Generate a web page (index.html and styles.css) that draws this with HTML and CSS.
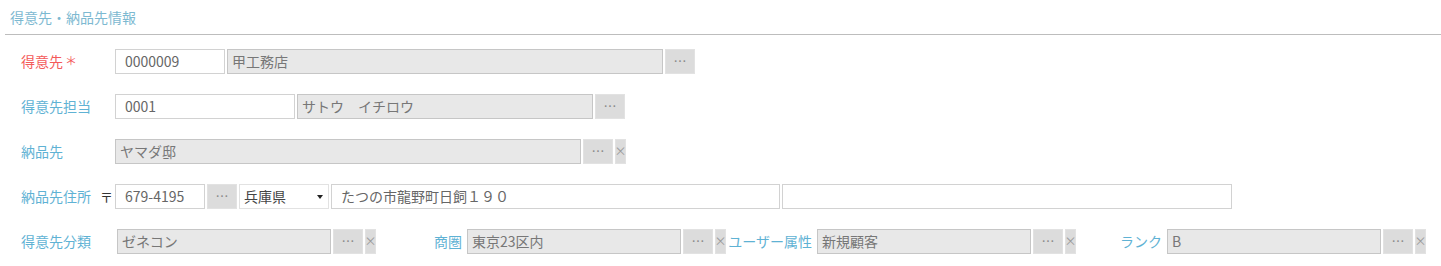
FILE: index.html
```html
<!DOCTYPE html>
<html lang="ja">
<head>
<meta charset="utf-8">
<link rel="stylesheet" href="styles.css">
</head>
<body>
<div class="section">
  <div class="section-title">得意先・納品先情報</div>
  <div class="form">
    <div class="row">
      <div class="label req">得意先<span class="ast">＊</span></div>
      <div class="field edit w110">0000009</div>
      <div class="field ro w436">甲工務店</div>
      <div class="btn">…</div>
    </div>
    <div class="row">
      <div class="label">得意先担当</div>
      <div class="field edit w180">0001</div>
      <div class="field ro w296">サトウ　イチロウ</div>
      <div class="btn">…</div>
    </div>
    <div class="row">
      <div class="label">納品先</div>
      <div class="field ro w466">ヤマダ邸</div>
      <div class="btn">…</div>
      <div class="clr">×</div>
    </div>
    <div class="row">
      <div class="label split"><span>納品先住所</span><span class="zip">〒</span></div>
      <div class="field edit w90">679-4195</div>
      <div class="btn">…</div>
      <div class="select w90"><span>兵庫県</span><span class="caret"></span></div>
      <div class="field edit w449">たつの市龍野町日飼１９０</div>
      <div class="field edit w450"></div>
    </div>
    <div class="row">
      <div class="group first">
        <div class="label w96">得意先分類</div>
        <div class="field ro w214">ゼネコン</div>
        <div class="btn">…</div>
        <div class="clr">×</div>
      </div>
      <div class="group">
        <div class="label right">商圏</div>
        <div class="field ro w214">東京23区内</div>
        <div class="btn">…</div>
        <div class="clr">×</div>
      </div>
      <div class="group">
        <div class="label right">ユーザー属性</div>
        <div class="field ro w214">新規顧客</div>
        <div class="btn">…</div>
        <div class="clr">×</div>
      </div>
      <div class="group">
        <div class="label right">ランク</div>
        <div class="field ro w214">B</div>
        <div class="btn">…</div>
        <div class="clr">×</div>
      </div>
    </div>
  </div>
</div>
</body>
</html>
```
FILE: styles.css
```css
html, body {
  margin: 0;
  padding: 0;
  background: #fff;
}
body {
  font-family: "Noto Sans CJK JP", "Noto Sans", sans-serif;
  font-size: 14px;
  color: #666;
}
.section {
  margin-left: 5px;
}
.section-title {
  height: 34px;
  line-height: 34px;
  padding-left: 5px;
  color: #7db9d1;
  font-size: 14px;
  border-bottom: 1px solid #bdbdbd;
}
.form {
  padding: 14px 0 0 16px;
  display: flex;
  flex-direction: column;
  gap: 20px;
}
.row {
  display: flex;
  align-items: center;
  height: 25px;
  gap: 2px;
}
.label {
  width: 94px;
  flex: none;
  color: #5fb2d4;
  line-height: 25px;
  white-space: nowrap;
  margin-right: -2px;
}
.label.req {
  color: #f45a5a;
}
.ast {
  font-size: 12px;
  margin-left: 2px;
  position: relative;
  top: -1px;
}
.label.split {
  display: flex;
  justify-content: space-between;
}
.zip {
  color: #333;
  font-size: 13px;
  margin-right: 2px;
}
.label.w96 {
  width: 96px;
}
.label.right {
  width: 91px;
  text-align: right;
  padding-right: 5px;
  box-sizing: border-box;
}
.group {
  display: flex;
  align-items: center;
  gap: 2px;
  height: 25px;
}
.group + .group {
  margin-left: -2px;
}
.field {
  height: 25px;
  box-sizing: border-box;
  line-height: 23px;
  white-space: nowrap;
  overflow: hidden;
  flex: none;
}
.field.edit {
  background: #fff;
  border: 1px solid #d2d2d2;
  padding-left: 9px;
  color: #666;
}
.field.ro {
  background: #e8e8e8;
  border: 1px solid #c6c6c6;
  padding-left: 4px;
  color: #777;
}
.select {
  height: 25px;
  box-sizing: border-box;
  border: 1px solid #e2e2e2;
  background: #fff;
  display: flex;
  align-items: center;
  justify-content: space-between;
  padding: 0 5px 0 4px;
  color: #444;
  line-height: 23px;
  flex: none;
}
.caret {
  width: 0;
  height: 0;
  border-left: 3.5px solid transparent;
  border-right: 3.5px solid transparent;
  border-top: 4px solid #222;
}
.btn {
  width: 30px;
  height: 25px;
  box-sizing: border-box;
  background: #dcdcdc;
  border: 1px solid #e2e2e2;
  color: #8a8a8a;
  font-size: 13px;
  text-align: center;
  line-height: 21px;
  flex: none;
}
.clr {
  width: 11px;
  height: 25px;
  box-sizing: border-box;
  background: #dcdcdc;
  border: 1px solid #e2e2e2;
  color: #999;
  font-size: 12px;
  line-height: 22px;
  flex: none;
  display: flex;
  justify-content: center;
  padding: 0;
}
.w90 { width: 90px; }
.w110 { width: 110px; }
.w180 { width: 180px; }
.w214 { width: 214px; }
.w296 { width: 296px; }
.w436 { width: 436px; }
.w449 { width: 449px; }
.w450 { width: 450px; }
.w466 { width: 466px; }
```
